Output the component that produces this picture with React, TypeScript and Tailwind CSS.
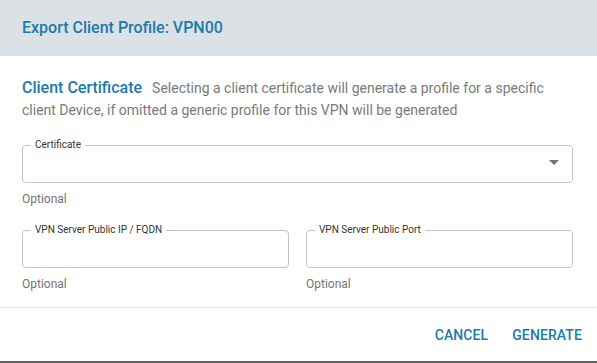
export default function App() {
    return (
        <div className="w-[597px] h-[363px] bg-white overflow-hidden flex flex-col font-['Roboto',sans-serif] border-b-2 border-[#5f5f5f]">
            {/* Header */}
            <div className="h-[56px] shrink-0 bg-[#dce1e5] flex items-center px-[22px]">
                <h1 className="text-[16px] font-medium text-[#1b7bab] leading-none">Export Client Profile: VPN00</h1>
            </div>

            {/* Body */}
            <div className="flex-1 pl-[22px] pr-[24px] pt-[21px]">
                <p className="text-[14px] leading-[22px] text-[#7a7a7a]">
                    <span className="text-[16px] font-medium text-[#1b7bab] mr-[10px]">Client Certificate</span>
                    Selecting a client certificate will generate a profile for a specific client Device, if omitted a generic profile for this VPN will be generated
                </p>

                <div className="mt-[19px]">
                    <fieldset className="h-[43px] border border-[#c4c4c4] rounded-[4px] px-[8px] flex items-center justify-end pr-[13px] pb-[7px]">
                        <legend className="text-[10px] px-[4px] text-[#333] leading-none">Certificate</legend>
                        <svg width="10" height="5" viewBox="0 0 10 5" className="text-[#757575]">
                            <path d="M0 0h10L5 5z" fill="currentColor" />
                        </svg>
                    </fieldset>
                    <p className="text-[12px] text-[#757575] mt-[10px] leading-none">Optional</p>
                </div>

                <div className="grid grid-cols-2 gap-[17px] mt-[20px]">
                    <div>
                        <fieldset className="h-[43px] border border-[#c4c4c4] rounded-[4px] px-[8px]">
                            <legend className="text-[10px] px-[4px] text-[#333] leading-none">VPN Server Public IP / FQDN</legend>
                        </fieldset>
                        <p className="text-[12px] text-[#757575] mt-[10px] leading-none">Optional</p>
                    </div>
                    <div>
                        <fieldset className="h-[43px] border border-[#c4c4c4] rounded-[4px] px-[8px]">
                            <legend className="text-[10px] px-[4px] text-[#333] leading-none">VPN Server Public Port</legend>
                        </fieldset>
                        <p className="text-[12px] text-[#757575] mt-[10px] leading-none">Optional</p>
                    </div>
                </div>
            </div>

            {/* Footer */}
            <div className="h-[54px] shrink-0 border-t border-[#e0e0e0] flex items-center justify-end gap-[24px] pr-[15px] pt-[2px]">
                <button className="text-[14px] font-medium text-[#1b7bab] tracking-[0.1px]">CANCEL</button>
                <button className="text-[14px] font-medium text-[#1b7bab] tracking-[0.1px]">GENERATE</button>
            </div>
        </div>
    );
}
